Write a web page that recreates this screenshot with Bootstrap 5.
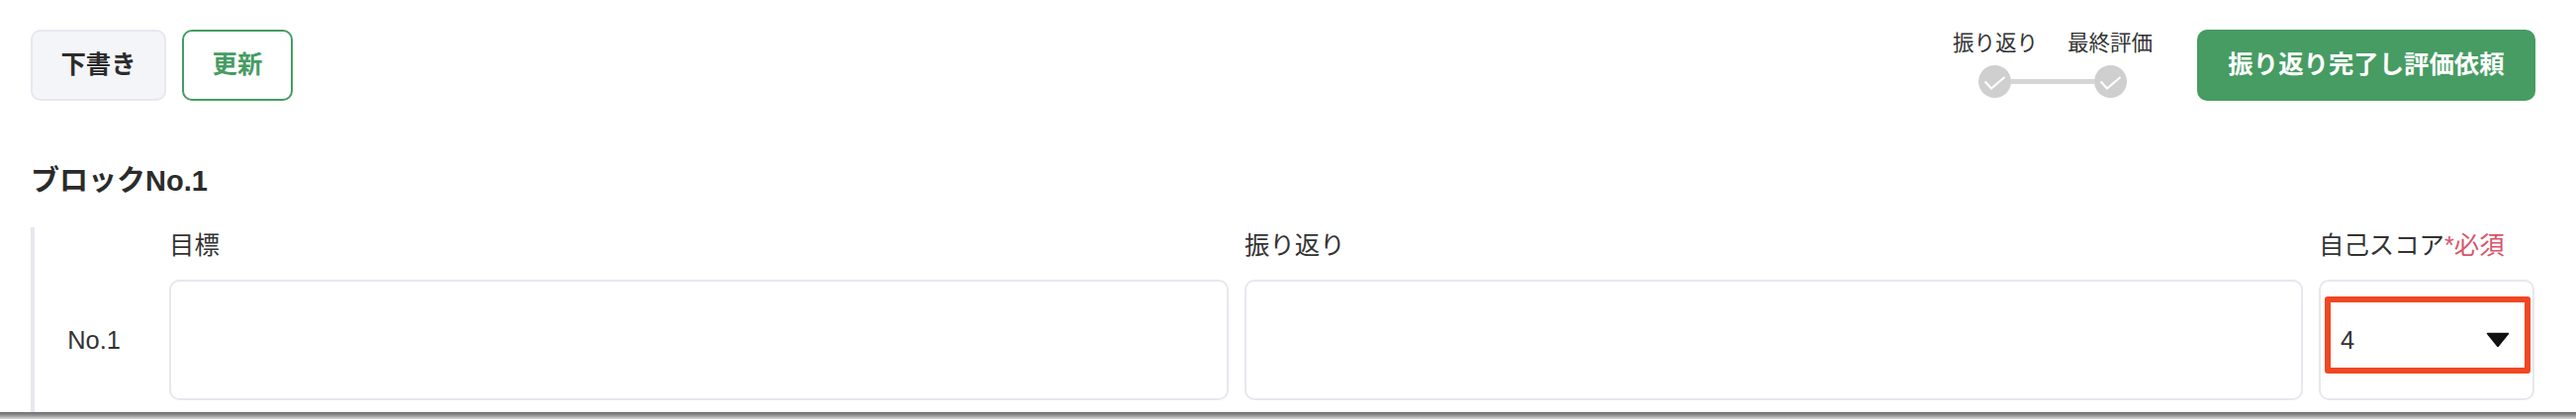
<!DOCTYPE html>
<html lang="ja">
<head>
<meta charset="utf-8">
<link href="https://cdn.jsdelivr.net/npm/bootstrap@5.3.0/dist/css/bootstrap.min.css" rel="stylesheet">
<style>
html,body{height:424px;overflow:hidden;background:#fff}
body{font-family:"Liberation Sans","Noto Sans CJK JP",sans-serif;color:#333;display:flex;flex-direction:column}
.sheet{height:417px;padding:30px 41px 0 31px;overflow:hidden}
.edge-bar{height:7px;background:linear-gradient(#6e6e6e,#8a8a8a 40%,#d8d8d8)}
.top-row{height:72px}
.act{font-size:25.4px;font-weight:700;line-height:1;border-radius:10px;height:72px;padding:0;display:flex;align-items:center;justify-content:center}
.act-draft{width:137px;background:#f4f5f8;border:2px solid #e7e8ee;color:#2b2b2b}
.act-draft:hover{background:#f4f5f8;border-color:#e7e8ee;color:#2b2b2b}
.act-update{width:112px;background:#fff;border:2px solid #469c62;color:#469c62}
.act-update:hover{background:#fff;border-color:#469c62;color:#469c62}
.act-done{width:342px;background:#469c62;border:0;color:#fff}
.act-done:hover{background:#469c62;color:#fff}
.step-box{width:202px;margin-right:45px}
.step-labels{font-size:21.5px;line-height:22px;margin-top:3px}
.step-track{width:150px;margin-top:11px}
.step-dot{width:33px;height:33px;border-radius:50%;background:#cfcfcf;flex:none}
.step-dot svg{width:33px;height:33px;display:block}
.step-line{height:5px;background:#d6d6d6;flex:1}
.block-title{font-size:29px;font-weight:700;line-height:30px;margin:66px 0 0;color:#2b2b2b}
.block-body{border-left:4px solid #e7e8ee;margin-top:32px;height:200px;display:grid;grid-template-columns:120px 1071px 1070px 218px;grid-template-rows:53px 122px;column-gap:16px;align-content:start}
.no-cell{display:flex;align-items:center;justify-content:center;font-size:25.4px}
.head-txt{font-size:25.4px;line-height:30px;padding-top:3px}
.req{color:#d9546b}
.field-box{height:122px;border:2px solid #e7e8ee;border-radius:10px;background:#fff}
.score-box{height:122px;border:2px solid #e7e8ee;border-radius:10px;padding:15px 2px 0 4px}
.score-frame{height:78px;border:6px solid #f04723;border-radius:3px;display:flex;align-items:center;justify-content:space-between;font-size:25.4px;padding:10px 15px 0 10px}
.score-frame svg{width:24px;height:16px;display:block}
</style>
</head>
<body>
<div class="sheet">
  <div class="top-row d-flex align-items-start">
    <div class="d-flex gap-3">
      <button type="button" class="btn act act-draft">下書き</button>
      <button type="button" class="btn act act-update">更新</button>
    </div>
    <div class="step-box ms-auto d-flex flex-column align-items-center">
      <div class="step-labels d-flex justify-content-between w-100"><span>振り返り</span><span>最終評価</span></div>
      <div class="step-track d-flex align-items-center">
        <div class="step-dot"><svg viewBox="0 0 33 33"><path d="M6.5 16.5L13 23.5 26.5 12" fill="none" stroke="#fff" stroke-width="2"/></svg></div>
        <div class="step-line"></div>
        <div class="step-dot"><svg viewBox="0 0 33 33"><path d="M6.5 16.5L13 23.5 26.5 12" fill="none" stroke="#fff" stroke-width="2"/></svg></div>
      </div>
    </div>
    <button type="button" class="btn act act-done">振り返り完了し評価依頼</button>
  </div>
  <h2 class="block-title">ブロックNo.1</h2>
  <div class="block-body">
    <div></div>
    <div class="head-txt">目標</div>
    <div class="head-txt">振り返り</div>
    <div class="head-txt">自己スコア<span class="req">*必須</span></div>
    <div class="no-cell">No.1</div>
    <div class="field-box"></div>
    <div class="field-box"></div>
    <div class="score-box"><div class="score-frame"><span>4</span><svg viewBox="0 0 24 16"><path d="M1.5 1.5h21L12 14.5z" fill="#111" stroke="#111" stroke-width="1.5" stroke-linejoin="round"/></svg></div></div>
  </div>
</div>
<div class="edge-bar"></div>
<script src="https://cdn.jsdelivr.net/npm/bootstrap@5.3.0/dist/js/bootstrap.bundle.min.js"></script>
</body>
</html>
